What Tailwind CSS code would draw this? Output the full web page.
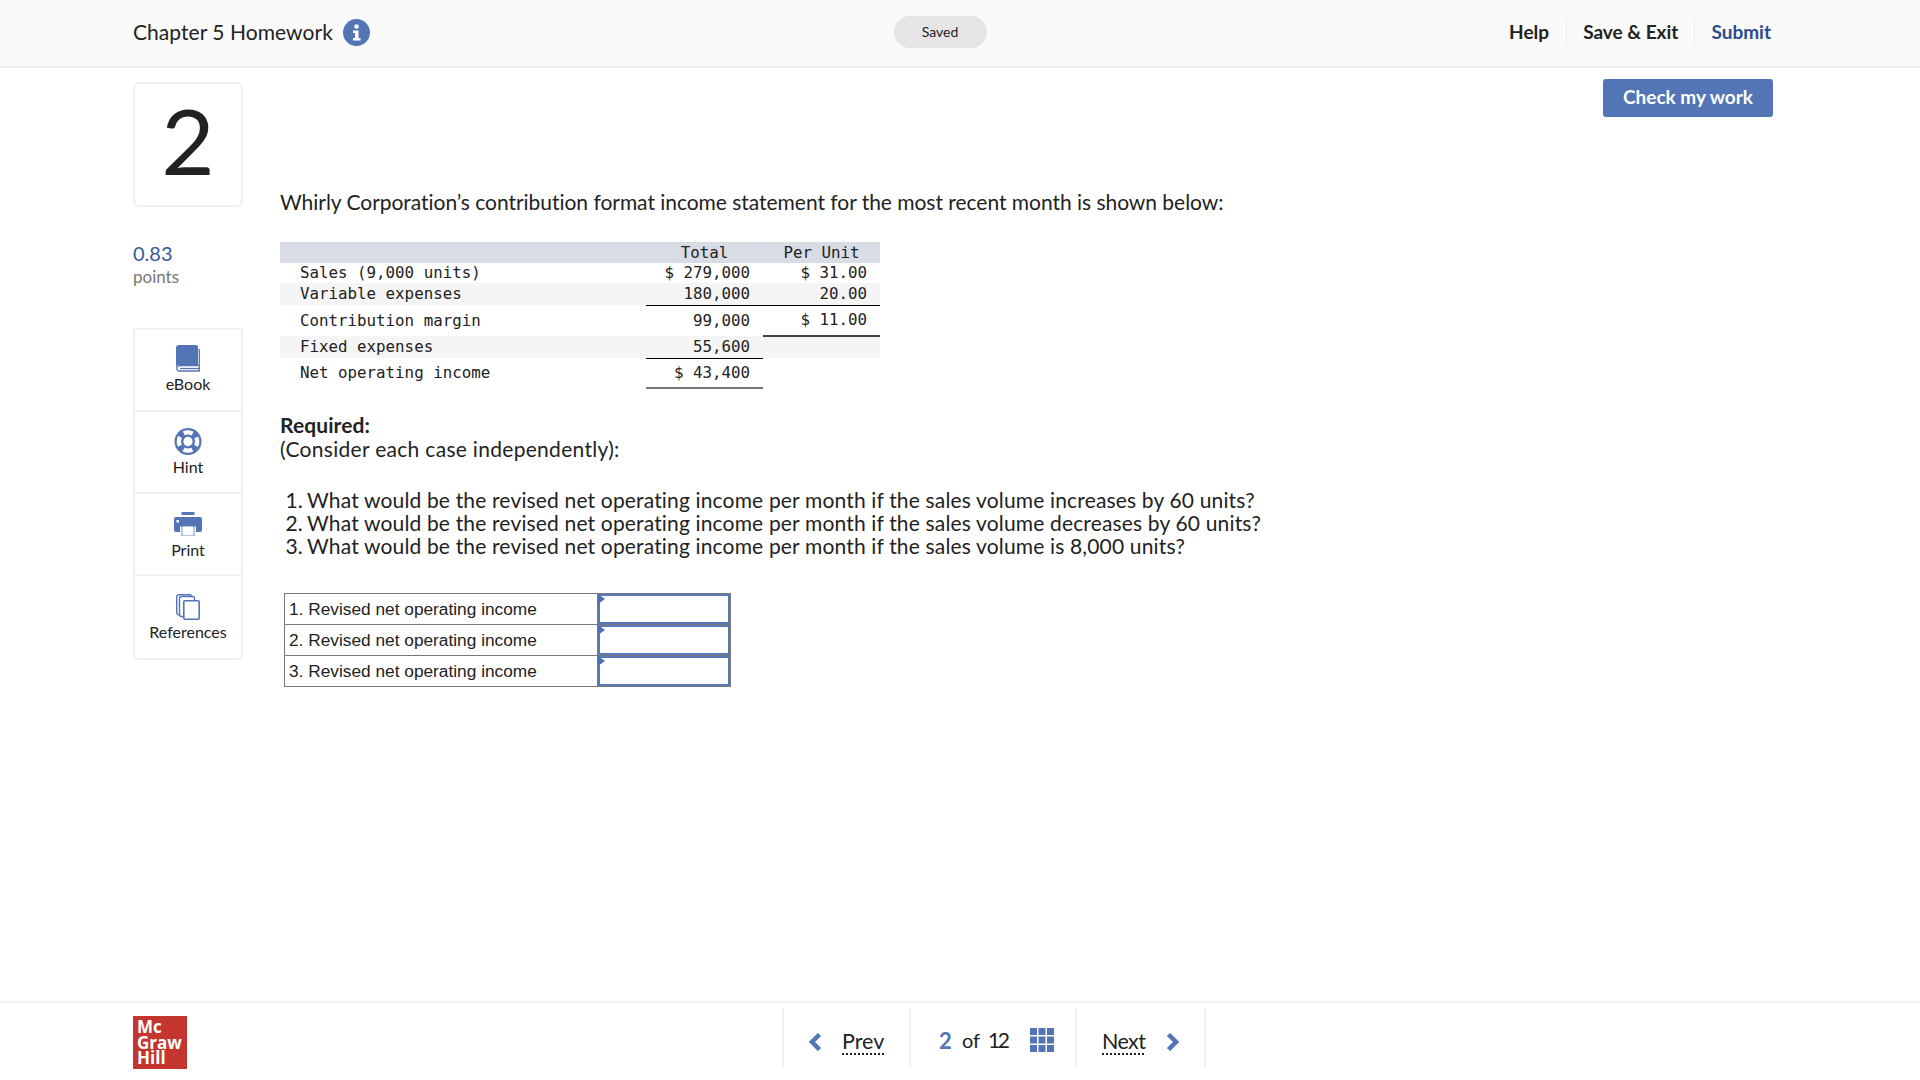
<!doctype html>
<html><head><meta charset="utf-8"><script src="https://cdn.jsdelivr.net/npm/@tailwindcss/browser@4"></script></head>
<body class="bg-white font-['Lato','Open_Sans',sans-serif] text-[#222]">
<div class="w-[1920px] h-[1080px] flex flex-col overflow-hidden">
  <header class="h-[68px] shrink-0 bg-[#fafafa] border-b-2 border-[#efefef] pl-[133px] pr-[149px] pb-[2px] grid grid-cols-3 items-center">
    <div class="flex items-center gap-[10px] text-[21px]">
      <span class="tracking-[0.05px]">Chapter 5 Homework</span>
      <svg class="w-[27px] h-[27px]" viewBox="0 0 27 27"><circle cx="13.5" cy="13.5" r="13.5" fill="#5475b5"/><circle cx="13.5" cy="7.5" r="2.3" fill="#fff"/><path d="M10 11.5h5.5V19H17.5v2.5H10V19h2v-5h-2z" fill="#fff"/></svg>
    </div>
    <div class="flex justify-center pr-[24px]"><span class="w-[93px] h-[32px] pb-[2px] rounded-full bg-[#e6e4e6] flex items-center justify-center text-[14px]">Saved</span></div>
    <nav class="flex justify-end items-center text-[19px] font-bold">
      <span class="pr-[17px] border-r border-[#e8e8e8] leading-[26px]">Help</span>
      <span class="px-[16px] border-r border-[#e8e8e8] leading-[26px]">Save &amp; Exit</span>
      <span class="pl-[16px] text-[#2c4a8c] leading-[26px]">Submit</span>
    </nav>
  </header>

  <main class="flex-1 flex pl-[133px] pr-[147px] min-h-0">
    <aside class="w-[110px] shrink-0 pt-[14px]">
      <div class="h-[125px] pb-[10px] border-2 border-[#f0f0f0] rounded-[6px] flex items-center justify-center text-[92px] leading-none text-[#222]">2</div>
      <div class="mt-[34px] text-[20px] leading-[24px] text-[#3b5a9a]">0.83</div>
      <div class="text-[17px] leading-[23px] text-[#777]">points</div>
      <div class="mt-[40px] border-2 border-[#f0f0f0] rounded-b-[6px] flex flex-col text-[16px] leading-[20px]">
        <div class="h-[82px] border-b-2 border-[#f0f0f0] flex flex-col items-center pt-[15px]">
          <svg class="w-[24px] h-[27px]" viewBox="0 0 24 27"><path d="M3 0h17a2 2 0 0 1 2 2v18H4a3 3 0 0 0-4 2.500V3a3 3 0 0 1 3-3z" fill="#5475b5"/><path d="M23.300 4v22H4a3.300 3.300 0 0 1-3.300-3.300A3.300 3.300 0 0 1 4 20.500h19" fill="none" stroke="#5475b5" stroke-width="1.300"/><path d="M4 23.500h19" stroke="#5475b5" stroke-width="1.300"/></svg>
          <span class="mt-[2px]">eBook</span>
        </div>
        <div class="h-[82px] border-b-2 border-[#f0f0f0] flex flex-col items-center pt-[16px]">
          <svg class="w-[28px] h-[27px]" viewBox="0 0 28 28"><circle cx="14" cy="14" r="14" fill="#5475b5"/><circle cx="14" cy="14" r="9.500" fill="none" stroke="#fff" stroke-width="4.500" stroke-dasharray="9.500 5.420" stroke-dashoffset="4.750"/><circle cx="14" cy="14" r="4.800" fill="#fff"/></svg>
          <span class="mt-[2px]">Hint</span>
        </div>
        <div class="h-[82px] border-b-2 border-[#f0f0f0] flex flex-col items-center pt-[18px]">
          <svg class="w-[28px] h-[24px]" viewBox="0 0 28 24"><rect x="7.500" y="0" width="13" height="3" fill="#5475b5"/><path d="M2 5h24a2 2 0 0 1 2 2v11a2 2 0 0 1-2 2h-4v-7H6v7H2a2 2 0 0 1-2-2V7a2 2 0 0 1 2-2z" fill="#5475b5"/><rect x="2.500" y="8" width="2.500" height="2.500" fill="#fff"/><rect x="6" y="13" width="16" height="1.500" fill="#5475b5"/><rect x="8" y="14" width="12" height="10" fill="#fff" stroke="#5475b5" stroke-width="0.800"/></svg>
          <span class="mt-[4px]">Print</span>
        </div>
        <div class="h-[82px] flex flex-col items-center pt-[18px]">
          <svg class="w-[24px] h-[26px]" viewBox="0 0 24 26"><rect x="0.700" y="0.700" width="15" height="20" rx="2" fill="#fff" stroke="#5475b5" stroke-width="1.400"/><rect x="3.500" y="2.500" width="15" height="20" rx="2" fill="#fff" stroke="#5475b5" stroke-width="1.400"/><rect x="7.800" y="6.800" width="15.400" height="18.400" rx="1" fill="#fff" stroke="#5475b5" stroke-width="1.600"/></svg>
          <span class="mt-[2px]">References</span>
        </div>
      </div>
    </aside>

    <section class="relative flex-1 pl-[37px] pt-[122px] text-[21px] leading-[24px]">
      <button class="absolute right-0 top-[11px] w-[170px] h-[38px] pb-[2px] bg-[#5475b5] rounded-[3px] text-white font-bold text-[19px]">Check my work</button>
      <p class="tracking-[-0.03px]">Whirly Corporation’s contribution format income statement for the most recent month is shown below:</p>

      <table class="mt-[28px] w-[600px] table-fixed border-collapse font-['DejaVu_Sans_Mono',monospace] text-[15.8px] leading-[18px] text-[#222]">
        <colgroup><col class="w-[366px]"><col class="w-[117px]"><col class="w-[117px]"></colgroup>
        <thead><tr class="h-[21px] bg-[#d7dce5] text-center"><th class="font-normal"></th><th class="font-normal">Total</th><th class="font-normal">Per Unit</th></tr></thead>
        <tbody>
          <tr class="h-[20px]"><td class="pl-[20px]">Sales (9,000 units)</td><td class="text-right pr-[13px]">$ 279,000</td><td class="text-right pr-[13px]">$ 31.00</td></tr>
          <tr class="h-[22px] bg-[#f5f5f5]"><td class="pl-[20px]">Variable expenses</td><td class="text-right pr-[13px] border-b border-black">180,000</td><td class="text-right pr-[13px] border-b border-black">20.00</td></tr>
          <tr class="h-[31px]"><td class="pl-[20px]">Contribution margin</td><td class="text-right pr-[13px]">99,000</td><td class="text-right pr-[13px] border-b-2 border-[#444]">$ 11.00</td></tr>
          <tr class="h-[22px] bg-[#f5f5f5]"><td class="pl-[20px]">Fixed expenses</td><td class="text-right pr-[13px] border-b border-black">55,600</td><td></td></tr>
          <tr class="h-[30px]"><td class="pl-[20px]">Net operating income</td><td class="text-right pr-[13px] border-b-2 border-[#777]">$ 43,400</td><td></td></tr>
        </tbody>
      </table>

      <p class="mt-[24px] font-bold tracking-[0.1px]">Required:</p>
      <p class="tracking-[0.3px]">(Consider each case independently):</p>

      <ol class="mt-[27px] leading-[23px] tracking-[0.16px]">
        <li class="flex gap-[4px]"><span class="w-[23px] text-right">1.</span><span>What would be the revised net operating income per month if the sales volume increases by 60 units?</span></li>
        <li class="flex gap-[4px]"><span class="w-[23px] text-right">2.</span><span>What would be the revised net operating income per month if the sales volume decreases by 60 units?</span></li>
        <li class="flex gap-[4px]"><span class="w-[23px] text-right">3.</span><span>What would be the revised net operating income per month if the sales volume is 8,000 units?</span></li>
      </ol>

      <table class="mt-[36px] ml-[4px] w-[446px] table-fixed border-collapse font-['Liberation_Sans',sans-serif] text-[17.3px] leading-[22px]">
        <colgroup><col class="w-[313px]"><col class="w-[133px]"></colgroup>
        <tbody>
          <tr class="h-[31px]"><td class="border border-[#777] pl-[4px]">1. Revised net operating income</td><td class="relative border border-[#777] bg-white shadow-[inset_0_0_0_2px_#5a78b8]"><span class="absolute left-0 top-0 border-l-[7px] border-l-[#4f6fb5] border-y-[5px] border-y-transparent"></span></td></tr>
          <tr class="h-[31px]"><td class="border border-[#777] pl-[4px]">2. Revised net operating income</td><td class="relative border border-[#777] bg-white shadow-[inset_0_0_0_2px_#5a78b8]"><span class="absolute left-0 top-0 border-l-[7px] border-l-[#4f6fb5] border-y-[5px] border-y-transparent"></span></td></tr>
          <tr class="h-[31px]"><td class="border border-[#777] pl-[4px]">3. Revised net operating income</td><td class="relative border border-[#777] bg-white shadow-[inset_0_0_0_2px_#5a78b8]"><span class="absolute left-0 top-0 border-l-[7px] border-l-[#4f6fb5] border-y-[5px] border-y-transparent"></span></td></tr>
        </tbody>
      </table>
    </section>
  </main>

  <footer class="h-[79px] shrink-0 border-t-2 border-[#f3f3f3] pl-[133px] flex items-start">
    <div class="mt-[13px] w-[54px] h-[53px] bg-[#c53530] text-white font-['Open_Sans',sans-serif] font-bold text-[17px] leading-[15.5px] pl-[4px] pt-[3px]">Mc<br>Graw<br>Hill</div>
    <nav class="ml-[595px] mt-[5px] flex h-[59px] text-[21.5px] border-x-2 border-[#f0f0f0]">
      <div class="w-[127px] flex items-center pl-[25px] pt-[8px] border-r-2 border-[#f0f0f0]">
        <svg class="w-[13px] h-[18px] mr-[20px]" viewBox="0 0 13 18"><path d="M10.500 1.500 3 9l7.500 7.500" fill="none" stroke="#5475b5" stroke-width="4.500"/></svg>
        <span class="underline decoration-dotted underline-offset-[4px]">Prev</span>
      </div>
      <div class="w-[166px] flex items-center pl-[28px] pt-[8px] border-r-2 border-[#f0f0f0]">
        <span class="w-[23px] font-bold text-[#5475b5] text-[22px] -mt-[3px]">2</span><span class="w-[26px] text-[20px] -mt-[3px]">of</span><span class="w-[42px] text-[21px] tracking-[-2.500px] -mt-[3px]">12</span>
        <svg class="w-[24px] h-[24px] mb-[4px]" viewBox="0 0 24 24" fill="#5475b5"><rect width="7" height="7"/><rect x="8.500" width="7" height="7"/><rect x="17" width="7" height="7"/><rect y="8.500" width="7" height="7"/><rect x="8.500" y="8.500" width="7" height="7"/><rect x="17" y="8.500" width="7" height="7"/><rect y="17" width="7" height="7"/><rect x="8.500" y="17" width="7" height="7"/><rect x="17" y="17" width="7" height="7"/></svg>
      </div>
      <div class="w-[127px] flex items-center pl-[25px] pt-[8px]">
        <span class="w-[64px] underline decoration-dotted underline-offset-[4px] tracking-[-0.6px]">Next</span>
        <svg class="w-[13px] h-[18px]" viewBox="0 0 13 18"><path d="M2.500 1.500 10 9l-7.500 7.500" fill="none" stroke="#5475b5" stroke-width="4.500"/></svg>
      </div>
    </nav>
  </footer>
</div>
</body></html>
